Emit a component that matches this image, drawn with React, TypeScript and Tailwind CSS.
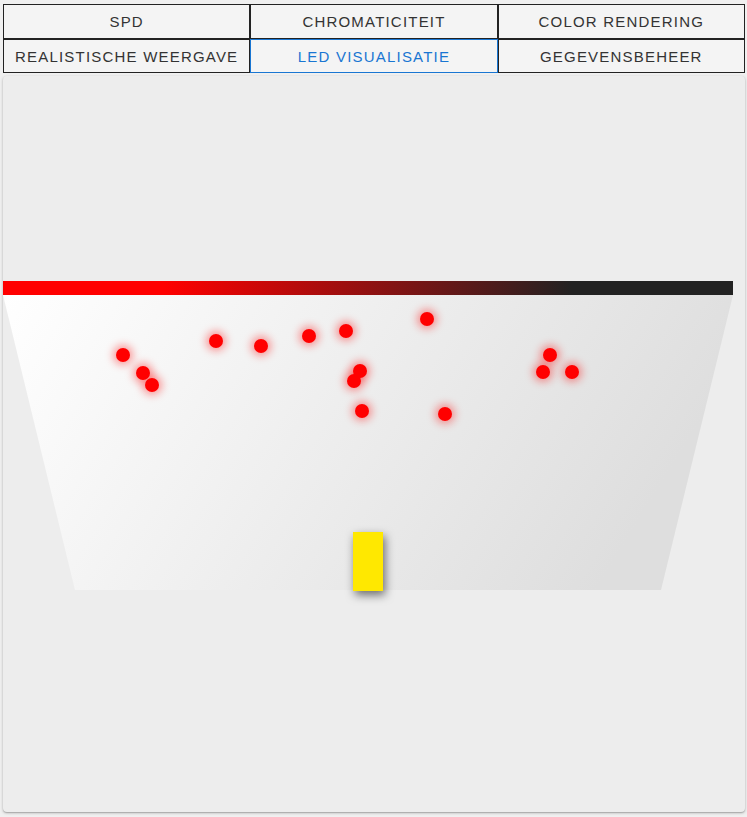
import React from "react";

const tabs = [
  { label: "SPD", active: false },
  { label: "CHROMATICITEIT", active: false },
  { label: "COLOR RENDERING", active: false },
  { label: "REALISTISCHE WEERGAVE", active: false },
  { label: "LED VISUALISATIE", active: true },
  { label: "GEGEVENSBEHEER", active: false },
];

const dots: [number, number][] = [
  [123, 354],
  [143, 372],
  [152, 384],
  [216, 340],
  [261, 345],
  [309, 335],
  [346, 330],
  [427, 318],
  [360, 370],
  [354, 380],
  [362, 410],
  [445, 413],
  [550, 354],
  [543, 371],
  [572, 371],
];

export default function App() {
  return (
    <div
      className="w-[747px] h-[817px] bg-[#f0f0f0] pl-[3px] pr-[2px] pt-[4px]"
      style={{ fontFamily: "'Liberation Sans', Arial, sans-serif" }}
    >
      <div className="grid grid-cols-3">
        {tabs.map((t) => (
          <div
            key={t.label}
            className={
              t.active
                ? "h-[34.5px] flex items-center justify-center pt-[2px] border border-[#1976d2] bg-[#f4f4f4] text-[15px] tracking-[1.2px] text-[#1976d2]"
                : "h-[34.5px] flex items-center justify-center pt-[2px] border border-[#222222] bg-[#f4f4f4] text-[15px] tracking-[1.2px] text-[#333333]"
            }
          >
            {t.label}
          </div>
        ))}
      </div>
      <div className="mt-[3px] h-[736px] rounded-[4px] bg-[#ededed] shadow-[0_1px_3px_rgba(0,0,0,0.25),0_1px_1px_rgba(0,0,0,0.14)] pt-[205px]">
        <div className="relative w-[730px] h-[310px]">
          <div className="h-[14px] bg-[linear-gradient(90deg,#ff0000_22%,#222222_78%)]" />
          <svg width="730" height="296" className="block">
            <defs>
              <linearGradient id="tg" x1="0" y1="0" x2="1" y2="0.25">
                <stop offset="0" stopColor="#ffffff" />
                <stop offset="1" stopColor="#dedede" />
              </linearGradient>
            </defs>
            <polygon points="0,0 730,0 658,295 72,295" fill="url(#tg)" />
          </svg>
          {dots.map(([cx, cy], i) => (
            <div
              key={i}
              className="absolute w-[14px] h-[14px] rounded-full bg-[#ff0000] shadow-[0_0_8px_3px_rgba(255,0,0,0.4)]"
              style={{ left: cx - 3 - 7, top: cy - 281 - 6 }}
            />
          ))}
          <div className="absolute left-[350px] top-[251px] w-[30px] h-[59px] bg-[#ffe800] shadow-[2px_4px_10px_rgba(0,0,0,0.55)]" />
        </div>
      </div>
    </div>
  );
}
